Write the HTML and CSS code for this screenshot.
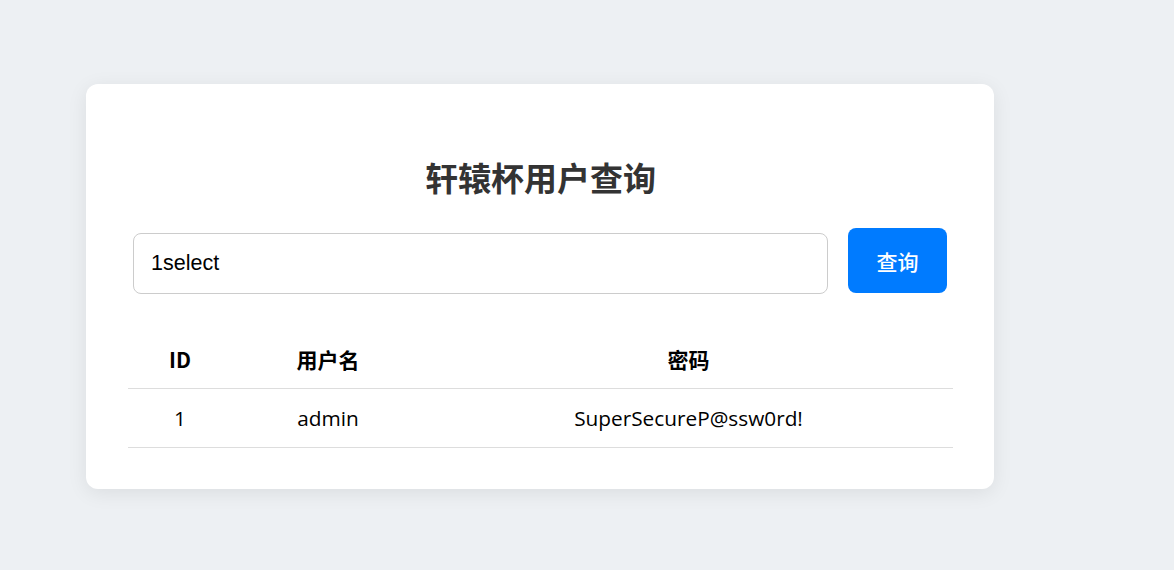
FILE: index.html
```html
<!DOCTYPE html>
<html lang="zh-CN">
<head>
<meta charset="utf-8">
<title>轩辕杯用户查询</title>
<link rel="stylesheet" href="styles.css">
</head>
<body>
<div class="card">
  <h1 class="title">轩辕杯用户查询</h1>
  <form class="search">
    <input class="search-input" type="text" value="1select">
    <button class="search-btn" type="button">查询</button>
  </form>
  <table class="result">
    <colgroup>
      <col class="c-id"><col class="c-user"><col class="c-pass">
    </colgroup>
    <thead>
      <tr><th>ID</th><th>用户名</th><th>密码</th></tr>
    </thead>
    <tbody>
      <tr><td>1</td><td>admin</td><td>SuperSecureP@ssw0rd!</td></tr>
    </tbody>
  </table>
</div>
</body>
</html>
```

FILE: styles.css
```css
html, body {
  margin: 0;
  padding: 0;
}
body {
  background: #edf0f3;
  height: 570px;
  padding: 84px 0 0 86px;
  box-sizing: border-box;
  font-family: "Open Sans", "Noto Sans CJK SC", sans-serif;
}
.card {
  width: 908px;
  box-sizing: border-box;
  background: #fff;
  border-radius: 12px;
  box-shadow: 0 4px 20px rgba(0, 0, 0, 0.08);
  padding: 42px 41px 41px 42px;
}
.title {
  margin: 32px 0 32px;
  text-align: center;
  font-family: "Noto Sans CJK SC", sans-serif;
  font-weight: 700;
  font-size: 33px;
  line-height: 38px;
  color: #333;
}
.search {
  display: flex;
  align-items: flex-start;
  gap: 20px;
  margin: 0 6px 0 5px;
}
.search-input {
  flex: 1;
  margin-top: 5px;
  height: 61px;
  box-sizing: border-box;
  border: 1px solid #ccc;
  border-radius: 8px;
  padding: 0 17px;
  font-family: "Liberation Sans", Arial, sans-serif;
  font-size: 21.5px;
  color: #000;
  outline: none;
}
.search-btn {
  width: 99px;
  height: 65px;
  border: none;
  border-radius: 8px;
  background: #007bff;
  color: #fff;
  font-family: "Noto Sans CJK SC", sans-serif;
  font-size: 21px;
  font-weight: 500;
  padding: 0;
}
.result {
  width: 825px;
  margin-top: 36px;
  border-collapse: collapse;
  table-layout: fixed;
  color: #000;
}
.c-id { width: 104px; }
.c-user { width: 192px; }
.c-pass { width: 529px; }
.result th, .result td {
  height: 58px;
  padding: 0;
  text-align: center;
  border-bottom: 1px solid #ddd;
  font-size: 21px;
}
.result th {
  font-weight: 700;
  font-family: "Noto Sans CJK SC", sans-serif;
}
.result td {
  font-weight: 400;
  font-size: 20.8px;
}
```
